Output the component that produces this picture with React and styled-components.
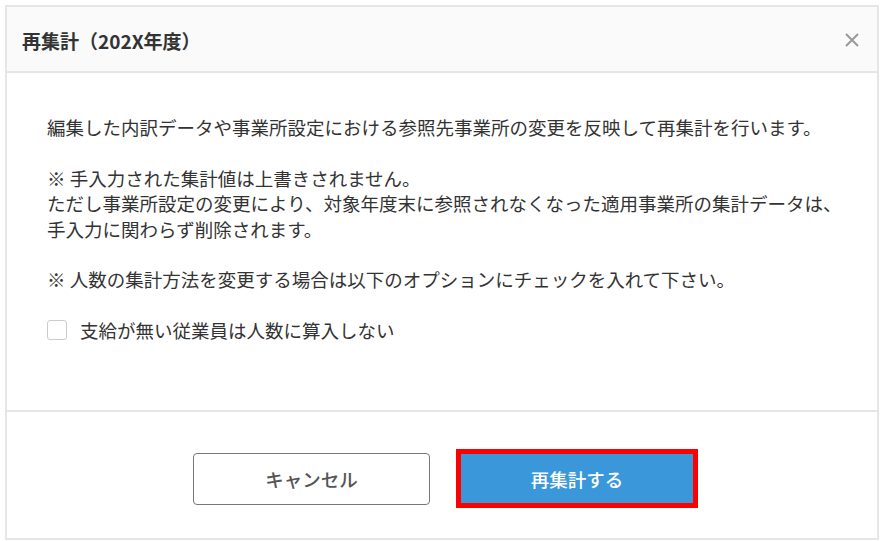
import React from 'react';
import styled, { createGlobalStyle } from 'styled-components';

const GlobalStyle = createGlobalStyle`
  html, body {
    margin: 0;
    padding: 0;
    background: #ffffff;
  }
  body {
    font-family: "Noto Sans CJK JP", "Noto Sans", sans-serif;
    color: #333333;
  }
`;

const Dialog = styled.div`
  box-sizing: border-box;
  margin: 5px 0 0 5px;
  width: 874px;
  height: 535px;
  border: 2px solid #e6e6e6;
  display: flex;
  flex-direction: column;
  background: #ffffff;
`;

const Header = styled.div`
  box-sizing: border-box;
  height: 66px;
  flex-shrink: 0;
  background: #fafafa;
  border-bottom: 2px solid #e6e6e6;
  display: flex;
  align-items: center;
  justify-content: space-between;
  padding: 2px 14px 0 15px;
`;

const Title = styled.h2`
  margin: 0;
  font-size: 19px;
  font-weight: 700;
  color: #333333;
`;

const CloseButton = styled.button`
  border: none;
  background: none;
  padding: 4px;
  cursor: pointer;
  display: flex;
  color: #999999;
`;

const Body = styled.div`
  box-sizing: border-box;
  flex: 1;
  padding: 42px 20px 0 40px;
  border-bottom: 2px solid #e6e6e6;
`;

const Paragraph = styled.p`
  margin: 0 0 ${(p) => (p.$gap ? '25px' : '0')};
  font-size: 18.5px;
  line-height: 25.5px;
  color: #333333;
  white-space: nowrap;
`;

const CheckRow = styled.label`
  display: flex;
  align-items: center;
  gap: 13px;
  margin-top: 24px;
  font-size: 18.5px;
  color: #333333;
  cursor: pointer;
`;

const CheckBox = styled.span`
  box-sizing: border-box;
  width: 20px;
  height: 20px;
  border: 1px solid #cccccc;
  border-radius: 3px;
  background: #ffffff;
`;

const Footer = styled.div`
  box-sizing: border-box;
  height: 126px;
  flex-shrink: 0;
  display: flex;
  align-items: center;
  justify-content: center;
  gap: 31px;
  padding: 7px 0 0 2px;
`;

const Button = styled.button`
  box-sizing: border-box;
  width: ${(p) => (p.$primary ? '232px' : '237px')};
  height: ${(p) => (p.$primary ? '49px' : '52px')};
  border-radius: ${(p) => (p.$primary ? '0' : '4px')};
  border: ${(p) => (p.$primary ? 'none' : '1px solid #777777')};
  background: ${(p) => (p.$primary ? '#3a98da' : '#ffffff')};
  color: ${(p) => (p.$primary ? '#ffffff' : '#555555')};
  outline: ${(p) => (p.$primary ? '5px solid #ff0000' : 'none')};
  font-family: "Noto Sans CJK JP", "Noto Sans", sans-serif;
  font-size: 18.5px;
  font-weight: 500;
  cursor: pointer;
`;

export default function App() {
  return (
    <>
      <GlobalStyle />
      <Dialog>
        <Header>
          <Title>再集計（202X年度）</Title>
          <CloseButton aria-label="close">
            <svg width="14" height="14" viewBox="0 0 14 14">
              <path d="M1 1 L13 13 M13 1 L1 13" stroke="currentColor" strokeWidth="2" fill="none" />
            </svg>
          </CloseButton>
        </Header>
        <Body>
          <Paragraph $gap>編集した内訳データや事業所設定における参照先事業所の変更を反映して再集計を行います。</Paragraph>
          <Paragraph>※ 手入力された集計値は上書きされません。</Paragraph>
          <Paragraph>ただし事業所設定の変更により、対象年度末に参照されなくなった適用事業所の集計データは、</Paragraph>
          <Paragraph $gap>手入力に関わらず削除されます。</Paragraph>
          <Paragraph>※ 人数の集計方法を変更する場合は以下のオプションにチェックを入れて下さい。</Paragraph>
          <CheckRow>
            <CheckBox />
            支給が無い従業員は人数に算入しない
          </CheckRow>
        </Body>
        <Footer>
          <Button>キャンセル</Button>
          <Button $primary>再集計する</Button>
        </Footer>
      </Dialog>
    </>
  );
}
